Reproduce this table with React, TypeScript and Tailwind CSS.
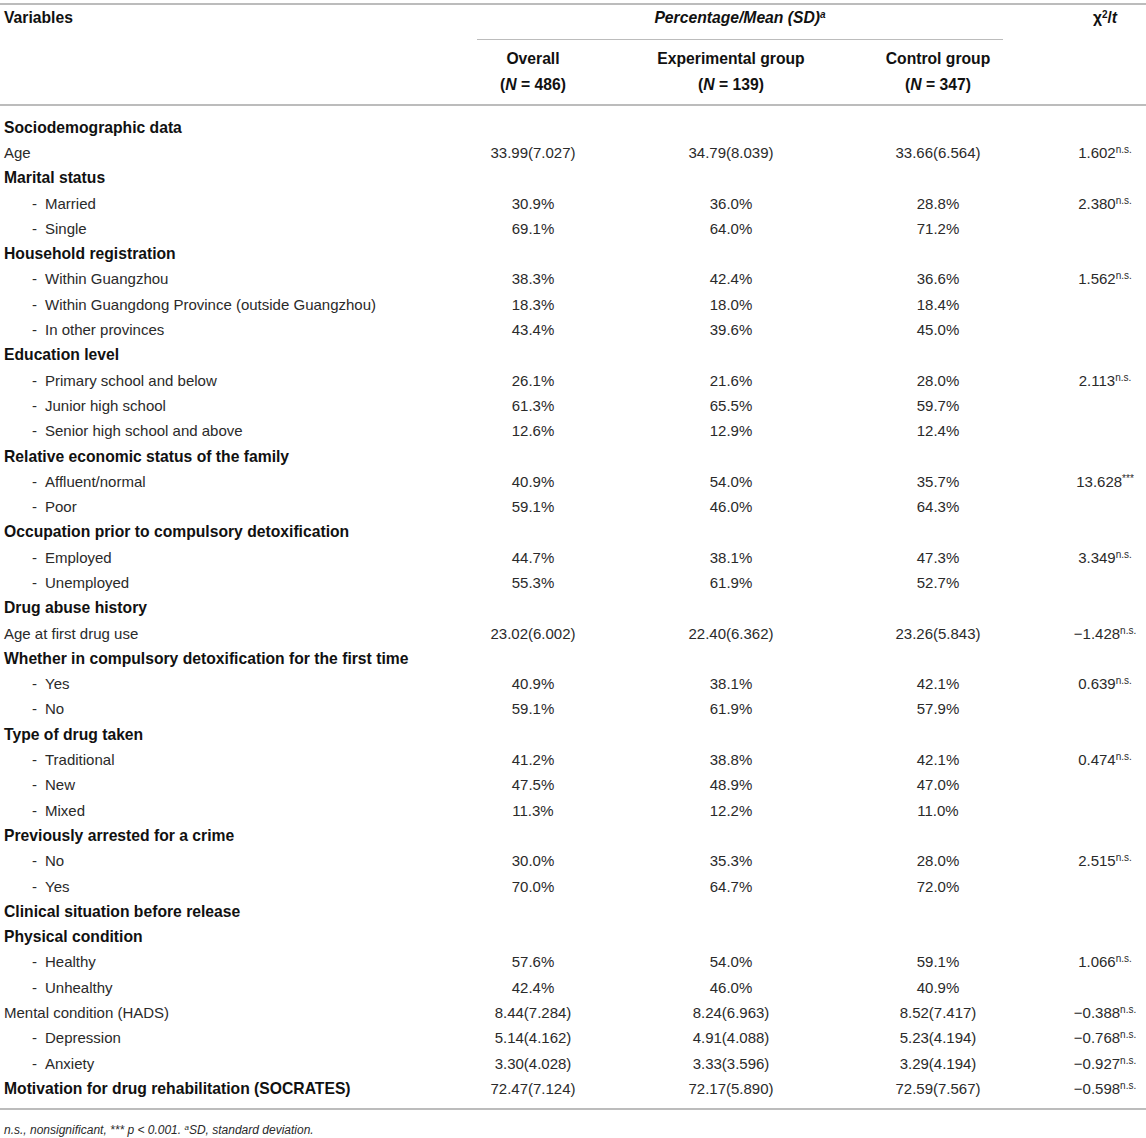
type Row = {
  label: string;
  kind: 'section' | 'plain' | 'item';
  o?: string;
  e?: string;
  c?: string;
  x?: string;
  sup?: string;
};

const rows: Row[] = [
  { label: 'Sociodemographic data', kind: 'section' },
  { label: 'Age', kind: 'plain', o: '33.99(7.027)', e: '34.79(8.039)', c: '33.66(6.564)', x: '1.602', sup: 'n.s.' },
  { label: 'Marital status', kind: 'section' },
  { label: 'Married', kind: 'item', o: '30.9%', e: '36.0%', c: '28.8%', x: '2.380', sup: 'n.s.' },
  { label: 'Single', kind: 'item', o: '69.1%', e: '64.0%', c: '71.2%' },
  { label: 'Household registration', kind: 'section' },
  { label: 'Within Guangzhou', kind: 'item', o: '38.3%', e: '42.4%', c: '36.6%', x: '1.562', sup: 'n.s.' },
  { label: 'Within Guangdong Province (outside Guangzhou)', kind: 'item', o: '18.3%', e: '18.0%', c: '18.4%' },
  { label: 'In other provinces', kind: 'item', o: '43.4%', e: '39.6%', c: '45.0%' },
  { label: 'Education level', kind: 'section' },
  { label: 'Primary school and below', kind: 'item', o: '26.1%', e: '21.6%', c: '28.0%', x: '2.113', sup: 'n.s.' },
  { label: 'Junior high school', kind: 'item', o: '61.3%', e: '65.5%', c: '59.7%' },
  { label: 'Senior high school and above', kind: 'item', o: '12.6%', e: '12.9%', c: '12.4%' },
  { label: 'Relative economic status of the family', kind: 'section' },
  { label: 'Affluent/normal', kind: 'item', o: '40.9%', e: '54.0%', c: '35.7%', x: '13.628', sup: '***' },
  { label: 'Poor', kind: 'item', o: '59.1%', e: '46.0%', c: '64.3%' },
  { label: 'Occupation prior to compulsory detoxification', kind: 'section' },
  { label: 'Employed', kind: 'item', o: '44.7%', e: '38.1%', c: '47.3%', x: '3.349', sup: 'n.s.' },
  { label: 'Unemployed', kind: 'item', o: '55.3%', e: '61.9%', c: '52.7%' },
  { label: 'Drug abuse history', kind: 'section' },
  { label: 'Age at first drug use', kind: 'plain', o: '23.02(6.002)', e: '22.40(6.362)', c: '23.26(5.843)', x: '\u22121.428', sup: 'n.s.' },
  { label: 'Whether in compulsory detoxification for the first time', kind: 'section' },
  { label: 'Yes', kind: 'item', o: '40.9%', e: '38.1%', c: '42.1%', x: '0.639', sup: 'n.s.' },
  { label: 'No', kind: 'item', o: '59.1%', e: '61.9%', c: '57.9%' },
  { label: 'Type of drug taken', kind: 'section' },
  { label: 'Traditional', kind: 'item', o: '41.2%', e: '38.8%', c: '42.1%', x: '0.474', sup: 'n.s.' },
  { label: 'New', kind: 'item', o: '47.5%', e: '48.9%', c: '47.0%' },
  { label: 'Mixed', kind: 'item', o: '11.3%', e: '12.2%', c: '11.0%' },
  { label: 'Previously arrested for a crime', kind: 'section' },
  { label: 'No', kind: 'item', o: '30.0%', e: '35.3%', c: '28.0%', x: '2.515', sup: 'n.s.' },
  { label: 'Yes', kind: 'item', o: '70.0%', e: '64.7%', c: '72.0%' },
  { label: 'Clinical situation before release', kind: 'section' },
  { label: 'Physical condition', kind: 'section' },
  { label: 'Healthy', kind: 'item', o: '57.6%', e: '54.0%', c: '59.1%', x: '1.066', sup: 'n.s.' },
  { label: 'Unhealthy', kind: 'item', o: '42.4%', e: '46.0%', c: '40.9%' },
  { label: 'Mental condition (HADS)', kind: 'plain', o: '8.44(7.284)', e: '8.24(6.963)', c: '8.52(7.417)', x: '\u22120.388', sup: 'n.s.' },
  { label: 'Depression', kind: 'item', o: '5.14(4.162)', e: '4.91(4.088)', c: '5.23(4.194)', x: '\u22120.768', sup: 'n.s.' },
  { label: 'Anxiety', kind: 'item', o: '3.30(4.028)', e: '3.33(3.596)', c: '3.29(4.194)', x: '\u22120.927', sup: 'n.s.' },
  { label: 'Motivation for drug rehabilitation (SOCRATES)', kind: 'section', o: '72.47(7.124)', e: '72.17(5.890)', c: '72.59(7.567)', x: '\u22120.598', sup: 'n.s.' },
];

const cols = 'grid grid-cols-[470px_126px_270px_144px_136px]';

function Rule() {
  return <div className="h-[2px] bg-[#bcbcbc]" />;
}

function DataRow({ row }: { row: Row }) {
  return (
    <div className={`${cols} h-[25.3px] items-center`}>
      <div className={`pl-[4px] whitespace-nowrap ${row.kind === 'section' ? 'text-[15.7px] font-bold text-[#111]' : ''}`}>
        {row.kind === 'item' ? (
          <>
            <span className="ml-[28px]">-</span>
            <span className="ml-[8px]">{row.label}</span>
          </>
        ) : (
          row.label
        )}
      </div>
      <div className="text-center">{row.o}</div>
      <div className="text-center">{row.e}</div>
      <div className="text-center">{row.c}</div>
      <div className="pl-[54px] text-center whitespace-nowrap">
        {row.x}
        {row.sup && <sup className="text-[10px] leading-none">{row.sup}</sup>}
      </div>
    </div>
  );
}

export default function App() {
  return (
    <div className="w-[1146px] bg-white text-[15px] leading-5 text-[#2a2a2a] font-['Liberation_Sans',Arial,sans-serif]">
      <div className="pt-[3px]">
        <Rule />
      </div>

      {/* header */}
      <div className={`${cols} text-[15.7px] font-bold text-[#111]`}>
        <div className="pl-[4px] pt-[3px]">Variables</div>
        <div className="col-span-3 pt-[3px]">
          <div className="text-center italic">
            Percentage/Mean (SD)<sup className="text-[10px]">a</sup>
          </div>
          <div className="mx-[7px] mt-[11px] h-[1px] bg-[#bcbcbc]" />
        </div>
        <div className="pl-[54px] pt-[3px] text-center">
          χ<sup className="text-[10px]">2</sup>/<i>t</i>
        </div>
      </div>
      <div className={`${cols} pt-[6px] pb-[6px] text-[15.7px] font-bold text-[#111] leading-[26px]`}>
        <div />
        <div className="text-center">
          <div>Overall</div>
          <div>
            (<i>N</i> = 486)
          </div>
        </div>
        <div className="text-center">
          <div>Experimental group</div>
          <div>
            (<i>N</i> = 139)
          </div>
        </div>
        <div className="text-center">
          <div>Control group</div>
          <div>
            (<i>N</i> = 347)
          </div>
        </div>
        <div />
      </div>
      <Rule />

      {/* body */}
      <div className="pt-[9px]">
        {rows.map((r, i) => (
          <DataRow key={i} row={r} />
        ))}
      </div>
      <div className="mt-[6px]">
        <Rule />
      </div>

      <div className="mt-[13px] pl-[4px] text-[12px] leading-[14px] italic">
        n.s., nonsignificant, *** p &lt; 0.001. <sup className="text-[8px]">a</sup>SD, standard deviation.
      </div>
    </div>
  );
}
